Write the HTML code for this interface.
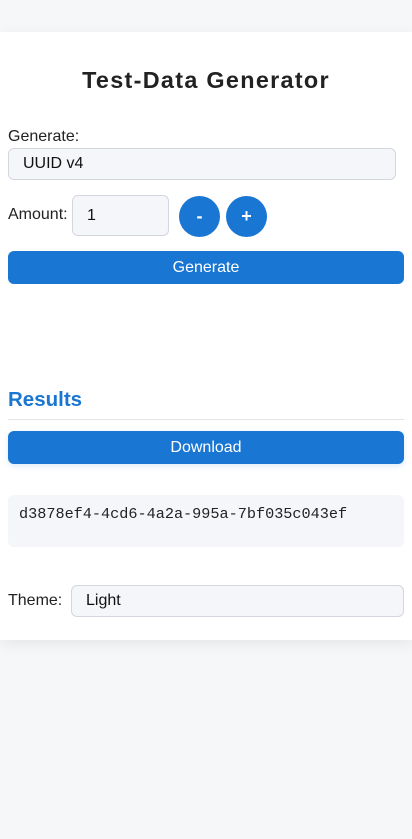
<!DOCTYPE html>
<html><head><style>
body{margin:0;background:#f6f7f9;font-family:"Liberation Sans",sans-serif;color:#222;width:412px;height:839px;overflow:hidden;position:relative}
.card{position:absolute;left:0;top:32px;width:412px;height:608px;background:#fff;box-shadow:0 4px 14px rgba(0,0,0,0.07)}
.a{position:absolute}
h1{position:absolute;left:0;width:412px;top:65px;margin:0;text-align:center;font-size:23.4px;font-weight:bold;letter-spacing:1.3px;line-height:30px;color:#222}
.box{background:#f5f6f9;border:1px solid #d3d7dd;border-radius:6px;box-sizing:border-box;font-size:16px;color:#111}
.btn{background:#1976d2;color:#fff;border-radius:6px;text-align:center;font-size:16px;box-sizing:border-box}
.c{background:#1976d2;color:#fff;border-radius:50%;width:41px;height:41px;text-align:center;line-height:41px;font-size:18px;font-weight:bold}
</style></head><body>
<div class="card"></div>
<h1>Test-Data Generator</h1>
<div class="a" style="left:8px;top:128px;font-size:16px">Generate:</div>
<div class="a box" style="left:8px;top:148px;width:388px;height:32px;padding:6px 14px;line-height:18px">UUID v4</div>
<div class="a" style="left:8px;top:206px;font-size:16px">Amount:</div>
<div class="a box" style="left:72px;top:195px;width:97px;height:41px;padding:0 14px;line-height:39px">1</div>
<div class="a c" style="left:179px;top:196px">-</div>
<div class="a c" style="left:226px;top:196px">+</div>
<div class="a btn" style="left:8px;top:251px;width:396px;height:33px;line-height:33px">Generate</div>
<div class="a" style="left:8px;top:388px;font-size:20.5px;font-weight:bold;color:#1976d2">Results</div>
<div class="a" style="left:8px;top:419px;width:396px;height:1px;background:#e3e5e8"></div>
<div class="a btn" style="left:8px;top:431px;width:396px;height:33px;line-height:33px;box-shadow:0 2px 6px rgba(25,118,210,0.15)">Download</div>
<div class="a" style="left:8px;top:495px;width:396px;height:52px;background:#f5f6f9;border-radius:6px"></div>
<div class="a" style="left:19px;top:505px;font-family:'Liberation Mono',monospace;font-size:15.2px;color:#222">d3878ef4-4cd6-4a2a-995a-7bf035c043ef</div>
<div class="a" style="left:8px;top:592px;font-size:16px">Theme:</div>
<div class="a box" style="left:71px;top:585px;width:333px;height:32px;padding:6px 14px;line-height:18px">Light</div>
</body></html>
